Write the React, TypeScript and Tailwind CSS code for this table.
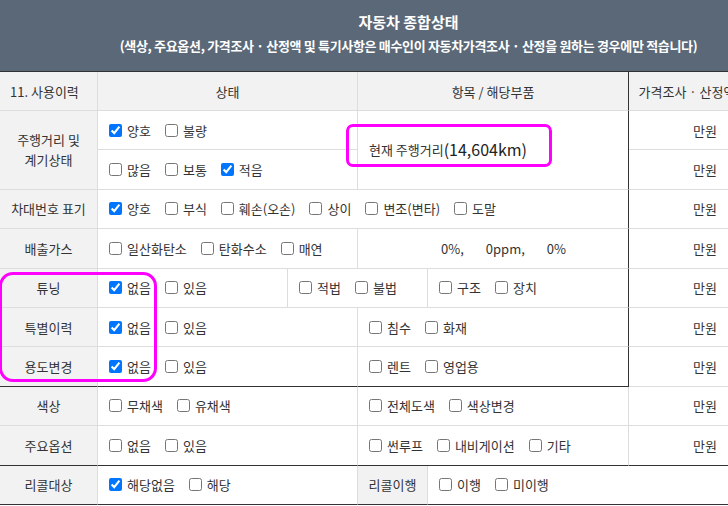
import { ReactNode } from 'react';

// 체크박스 + 라벨
const Check = ({ label, checked = false }: { label: string; checked?: boolean }) => (
  <label className="flex items-center gap-[5px] whitespace-nowrap">
    <input type="checkbox" defaultChecked={checked} className="m-0 h-[13px] w-[13px]" />
    <span>{label}</span>
  </label>
);

const Checks = ({ items }: { items: [string, boolean?][] }) => (
  <div className="flex items-center gap-[14px]">
    {items.map(([label, checked]) => (
      <Check key={label} label={label} checked={checked} />
    ))}
  </div>
);

const Cell = ({ className = '', children }: { className?: string; children?: ReactNode }) => (
  <div className={`box-border flex items-center border-b border-r border-[#dddddd] ${className}`}>
    {children}
  </div>
);

const Label = ({ className = '', children }: { className?: string; children?: ReactNode }) => (
  <Cell className={`justify-center bg-[#f2f2f2] text-center ${className}`}>{children}</Cell>
);

const Won = ({ className = '' }: { className?: string }) => (
  <Cell className={`justify-end pr-[28px] ${className}`}>만원</Cell>
);

const App = () => {
  return (
    <div className="h-[506px] w-[728px] overflow-hidden bg-white text-[13px] leading-[17px] text-[#333333] [font-family:'Noto_Sans_CJK_KR',sans-serif]">
      <div className="w-[817px]">
        {/* 상단 제목 */}
        <div className="box-border flex h-[72px] flex-col items-center border-b border-[#333333] bg-[#5b6878] pt-[12px] text-white">
          <div className="text-[15px] font-bold leading-[20px]">자동차 종합상태</div>
          <div className="mt-[4px] text-[13px] font-bold leading-[20px] tracking-[-0.33px]">
            (색상, 주요옵션, 가격조사 · 산정액 및 특기사항은 매수인이 자동차가격조사 · 산정을 원하는 경우에만 적습니다)
          </div>
        </div>

        <div className="relative grid grid-cols-[98px_190px_70px_70px_201px_117px_71px] grid-rows-[39px_repeat(10,39.4px)]">
          {/* 헤더 */}
          <Label className="!justify-start pl-[10px]">11. 사용이력</Label>
          <Label className="col-span-2">상태</Label>
          <Label className="col-span-2 border-r-[#333333]">항목 / 해당부품</Label>
          <Label className="whitespace-nowrap">가격조사 · 산정액</Label>
          <Label>특기사항</Label>

          {/* 주행거리 */}
          <Label className="row-span-2 flex-col">
            <div className="leading-[20px]">주행거리 및</div>
            <div className="leading-[20px]">계기상태</div>
          </Label>
          <Cell className="col-span-2 pl-[11px]">
            <Checks items={[['양호', true], ['불량']]} />
          </Cell>
          <Cell className="col-span-2 row-span-2 border-r-[#333333] pl-[11px]">
            <span>현재 주행거리</span>
            <span className="text-[16px] text-[#222222]">(14,604km)</span>
          </Cell>
          <Won />
          <Cell />
          <Cell className="col-span-2 pl-[11px]">
            <Checks items={[['많음'], ['보통'], ['적음', true]]} />
          </Cell>
          <Won />
          <Cell />

          {/* 차대번호 */}
          <Label>차대번호 표기</Label>
          <Cell className="col-span-4 border-r-[#333333] pl-[11px]">
            <Checks items={[['양호', true], ['부식'], ['훼손(오손)'], ['상이'], ['변조(변타)'], ['도말']]} />
          </Cell>
          <Won />
          <Cell />

          {/* 배출가스 */}
          <Label>배출가스</Label>
          <Cell className="col-span-2 pl-[11px]">
            <Checks items={[['일산화탄소'], ['탄화수소'], ['매연']]} />
          </Cell>
          <Cell className="col-span-2 gap-[22px] border-r-[#333333] pl-[83px]">
            <span>0%,</span>
            <span>0ppm,</span>
            <span>0%</span>
          </Cell>
          <Won />
          <Cell />

          {/* 튜닝 */}
          <Label>튜닝</Label>
          <Cell className="pl-[11px]">
            <Checks items={[['없음', true], ['있음']]} />
          </Cell>
          <Cell className="col-span-2 pl-[11px]">
            <Checks items={[['적법'], ['불법']]} />
          </Cell>
          <Cell className="border-r-[#333333] pl-[11px]">
            <Checks items={[['구조'], ['장치']]} />
          </Cell>
          <Won />
          <Cell />

          {/* 특별이력 */}
          <Label>특별이력</Label>
          <Cell className="col-span-2 pl-[11px]">
            <Checks items={[['없음', true], ['있음']]} />
          </Cell>
          <Cell className="col-span-2 border-r-[#333333] pl-[11px]">
            <Checks items={[['침수'], ['화재']]} />
          </Cell>
          <Won />
          <Cell />

          {/* 용도변경 */}
          <Label className="border-b-[#333333]">용도변경</Label>
          <Cell className="col-span-2 border-b-[#333333] pl-[11px]">
            <Checks items={[['없음', true], ['있음']]} />
          </Cell>
          <Cell className="col-span-2 border-b-[#333333] border-r-[#333333] pl-[11px]">
            <Checks items={[['렌트'], ['영업용']]} />
          </Cell>
          <Won />
          <Cell />

          {/* 색상 */}
          <Label>색상</Label>
          <Cell className="col-span-2 pl-[11px]">
            <Checks items={[['무채색'], ['유채색']]} />
          </Cell>
          <Cell className="col-span-2 pl-[11px]">
            <Checks items={[['전체도색'], ['색상변경']]} />
          </Cell>
          <Won />
          <Cell />

          {/* 주요옵션 */}
          <Label className="border-b-[#333333]">주요옵션</Label>
          <Cell className="col-span-2 border-b-[#333333] pl-[11px]">
            <Checks items={[['없음'], ['있음']]} />
          </Cell>
          <Cell className="col-span-2 border-b-[#333333] pl-[11px]">
            <Checks items={[['썬루프'], ['내비게이션'], ['기타']]} />
          </Cell>
          <Won className="border-b-[#333333]" />
          <Cell className="border-b-[#333333]" />

          {/* 리콜 */}
          <Label className="border-b-[#333333]">리콜대상</Label>
          <Cell className="col-span-2 border-b-[#333333] pl-[11px]">
            <Checks items={[['해당없음', true], ['해당']]} />
          </Cell>
          <Label className="border-b-[#333333]">리콜이행</Label>
          <Cell className="col-span-3 border-b-[#333333] pl-[11px]">
            <Checks items={[['이행'], ['미이행']]} />
          </Cell>

          {/* 강조 표시 */}
          <div className="pointer-events-none absolute left-[346px] top-[52px] h-[43px] w-[206px] rounded-[7px] border-[3px] border-[#ff00ff]" />
          <div className="pointer-events-none absolute left-[-1px] top-[200px] h-[110px] w-[158px] rounded-[14px] border-[3px] border-[#ff00ff]" />
        </div>
      </div>
    </div>
  );
};

export default App;
